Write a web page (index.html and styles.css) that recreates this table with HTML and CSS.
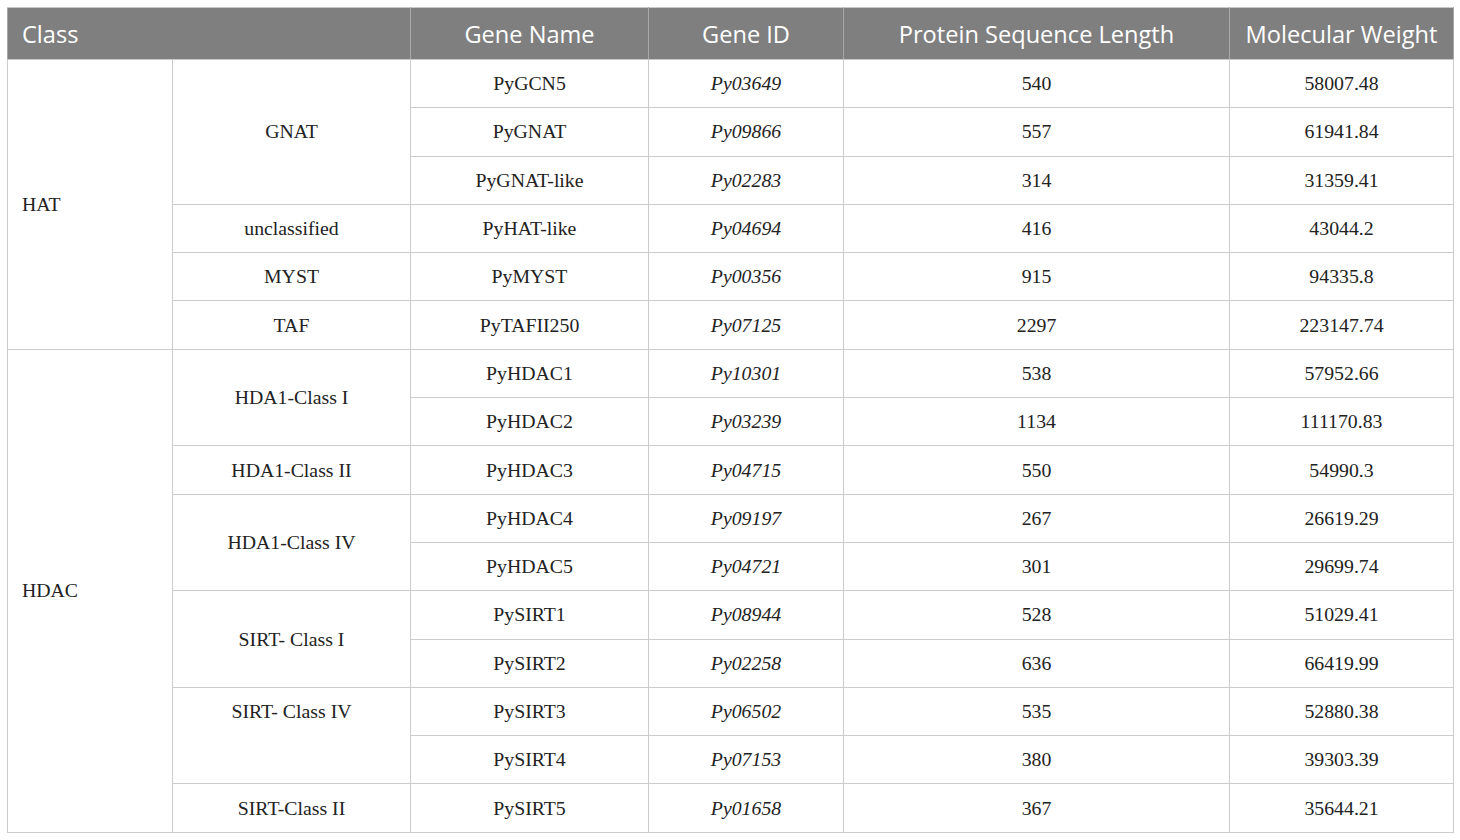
FILE: index.html
```html
<!DOCTYPE html>
<html>
<head>
<meta charset="utf-8">
<link rel="stylesheet" href="styles.css">
</head>
<body>
<table class="gene-table">
  <colgroup>
    <col class="c1"><col class="c2"><col class="c3"><col class="c4"><col class="c5"><col class="c6">
  </colgroup>
  <thead>
    <tr>
      <th class="left" colspan="2">Class</th>
      <th>Gene Name</th>
      <th>Gene ID</th>
      <th>Protein Sequence Length</th>
      <th>Molecular Weight</th>
    </tr>
  </thead>
  <tbody>
    <tr><td class="left" rowspan="6">HAT</td><td rowspan="3">GNAT</td><td>PyGCN5</td><td class="id">Py03649</td><td>540</td><td>58007.48</td></tr>
    <tr><td>PyGNAT</td><td class="id">Py09866</td><td>557</td><td>61941.84</td></tr>
    <tr><td>PyGNAT-like</td><td class="id">Py02283</td><td>314</td><td>31359.41</td></tr>
    <tr><td>unclassified</td><td>PyHAT-like</td><td class="id">Py04694</td><td>416</td><td>43044.2</td></tr>
    <tr><td>MYST</td><td>PyMYST</td><td class="id">Py00356</td><td>915</td><td>94335.8</td></tr>
    <tr><td>TAF</td><td>PyTAFII250</td><td class="id">Py07125</td><td>2297</td><td>223147.74</td></tr>
    <tr><td class="left" rowspan="10">HDAC</td><td rowspan="2">HDA1-Class I</td><td>PyHDAC1</td><td class="id">Py10301</td><td>538</td><td>57952.66</td></tr>
    <tr><td>PyHDAC2</td><td class="id">Py03239</td><td>1134</td><td>111170.83</td></tr>
    <tr><td>HDA1-Class II</td><td>PyHDAC3</td><td class="id">Py04715</td><td>550</td><td>54990.3</td></tr>
    <tr><td rowspan="2">HDA1-Class IV</td><td>PyHDAC4</td><td class="id">Py09197</td><td>267</td><td>26619.29</td></tr>
    <tr><td>PyHDAC5</td><td class="id">Py04721</td><td>301</td><td>29699.74</td></tr>
    <tr><td rowspan="2">SIRT- Class I</td><td>PySIRT1</td><td class="id">Py08944</td><td>528</td><td>51029.41</td></tr>
    <tr><td>PySIRT2</td><td class="id">Py02258</td><td>636</td><td>66419.99</td></tr>
    <tr><td rowspan="2" class="top">SIRT- Class IV</td><td>PySIRT3</td><td class="id">Py06502</td><td>535</td><td>52880.38</td></tr>
    <tr><td>PySIRT4</td><td class="id">Py07153</td><td>380</td><td>39303.39</td></tr>
    <tr><td>SIRT-Class II</td><td>PySIRT5</td><td class="id">Py01658</td><td>367</td><td>35644.21</td></tr>
  </tbody>
</table>
</body>
</html>
```

FILE: styles.css
```css
html, body {
  margin: 0;
  padding: 0;
  background: #ffffff;
}

body {
  padding: 7px 0 0 7px;
}

.gene-table {
  border-collapse: collapse;
  table-layout: fixed;
  width: 1446px;
  border: 1px solid #c9c9c9;
}

.c1 { width: 165px; }
.c2 { width: 238px; }
.c3 { width: 238px; }
.c4 { width: 195px; }
.c5 { width: 386px; }
.c6 { width: 224px; }

.gene-table th {
  background: #7f7f7f;
  color: #ffffff;
  font-family: "Open Sans", "Liberation Sans", sans-serif;
  font-weight: 400;
  font-size: 23.6px;
  height: 51px;
  padding: 0 6px;
  text-align: center;
  vertical-align: middle;
  border: 1px solid #a8a8a8;
  border-top-color: #c9c9c9;
  border-bottom-color: #c9c9c9;
  white-space: nowrap;
}

.gene-table th.left {
  text-align: left;
  padding-left: 14px;
}

.gene-table td {
  font-family: "Liberation Serif", "Times New Roman", serif;
  font-size: 19.8px;
  color: #222222;
  height: 47.3px;
  padding: 0 6px;
  text-align: center;
  vertical-align: middle;
  border: 1px solid #cccccc;
  white-space: nowrap;
}

.gene-table td.left {
  text-align: left;
  padding-left: 14px;
}

.gene-table td.id {
  font-style: italic;
}

.gene-table td.top {
  vertical-align: top;
  padding-top: 12px;
}
```
